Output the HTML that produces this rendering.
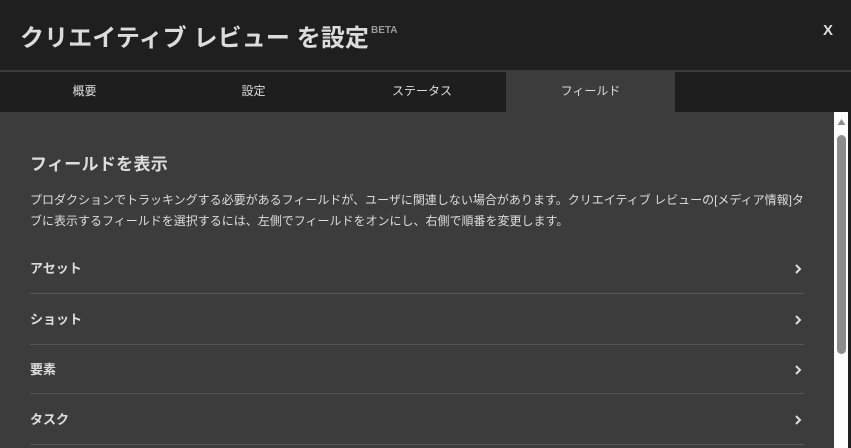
<!DOCTYPE html>
<html><head><meta charset="utf-8"><style>
*{margin:0;padding:0;box-sizing:border-box}
body{width:851px;height:448px;overflow:hidden;background:#3c3c3c;font-family:"Liberation Sans","Noto Sans CJK JP",sans-serif;color:#ddd;position:relative}
.hdr{position:absolute;left:0;top:0;width:851px;height:71px;background:#1f1f1f;border-bottom:1px solid #3a3a3a}
.title{position:absolute;left:20px;top:18px;font-size:24px;font-weight:bold;color:#dcdcdc;white-space:nowrap;letter-spacing:0.1px}
.title sup{font-size:10px;color:#999;position:relative;top:-4px;margin-left:2px;letter-spacing:0}
.x{position:absolute;left:823px;top:22px;font-size:15px;font-weight:bold;color:#ddd}
.tabs{position:absolute;left:0;top:72px;width:851px;height:40px;background:#1e1e1e}
.tab{position:absolute;top:0;height:40px;line-height:38px;text-align:center;font-size:12px;color:#ddd}
.tab.a{background:#3c3c3c}
h2{position:absolute;left:30px;top:150px;font-size:17px;font-weight:bold;color:#ddd;letter-spacing:0.3px}
.p{position:absolute;left:30px;top:190px;width:778px;font-size:12px;line-height:21px;color:#ddd}
.row{position:absolute;left:30px;width:774px;height:50px;border-bottom:1px solid #555;font-size:13px;font-weight:bold;color:#ddd}
.row span{position:absolute;left:0;top:-2px}
.row svg{position:absolute;right:2px;top:4px}
.sb{position:absolute;left:834px;top:112px;width:14px;height:336px;background:#fdfdfd}
.sb2{position:absolute;left:848px;top:112px;width:3px;height:336px;background:#1e1e1e}
.th{position:absolute;left:837px;top:135px;width:9px;height:219px;background:#8c8c8c;border-radius:5px}
</style></head><body>
<div class="hdr"><div class="title">クリエイティブ レビュー を設定<sup>BETA</sup></div><div class="x">X</div></div>
<div class="tabs">
<div class="tab" style="left:0;width:169px">概要</div>
<div class="tab" style="left:169px;width:169px">設定</div>
<div class="tab" style="left:338px;width:168px">ステータス</div>
<div class="tab a" style="left:506px;width:169px">フィールド</div>
</div>
<h2>フィールドを表示</h2>
<div class="p">プロダクションでトラッキングする必要があるフィールドが、ユーザに関連しない場合があります。クリエイティブ レビューの[メディア情報]タ<br>ブに表示するフィールドを選択するには、左側でフィールドをオンにし、右側で順番を変更します。</div>
<div class="row" style="top:260px;height:34px"><span>アセット</span><svg width="8" height="10" viewBox="0 0 8 10"><path d="M2 1l4 4-4 4" stroke="#ddd" stroke-width="2" fill="none"/></svg></div>
<div class="row" style="top:311px;height:34px"><span>ショット</span><svg width="8" height="10" viewBox="0 0 8 10"><path d="M2 1l4 4-4 4" stroke="#ddd" stroke-width="2" fill="none"/></svg></div>
<div class="row" style="top:361px;height:33px"><span>要素</span><svg width="8" height="10" viewBox="0 0 8 10"><path d="M2 1l4 4-4 4" stroke="#ddd" stroke-width="2" fill="none"/></svg></div>
<div class="row" style="top:411px;height:34px"><span>タスク</span><svg width="8" height="10" viewBox="0 0 8 10"><path d="M2 1l4 4-4 4" stroke="#ddd" stroke-width="2" fill="none"/></svg></div>
<div class="sb"></div><div class="sb2"></div>
<svg style="position:absolute;left:837px;top:118px" width="9" height="8"><path d="M4.5 1L8.5 7H0.5Z" fill="#8c8c8c"/></svg>
<div class="th"></div>
</body></html>
